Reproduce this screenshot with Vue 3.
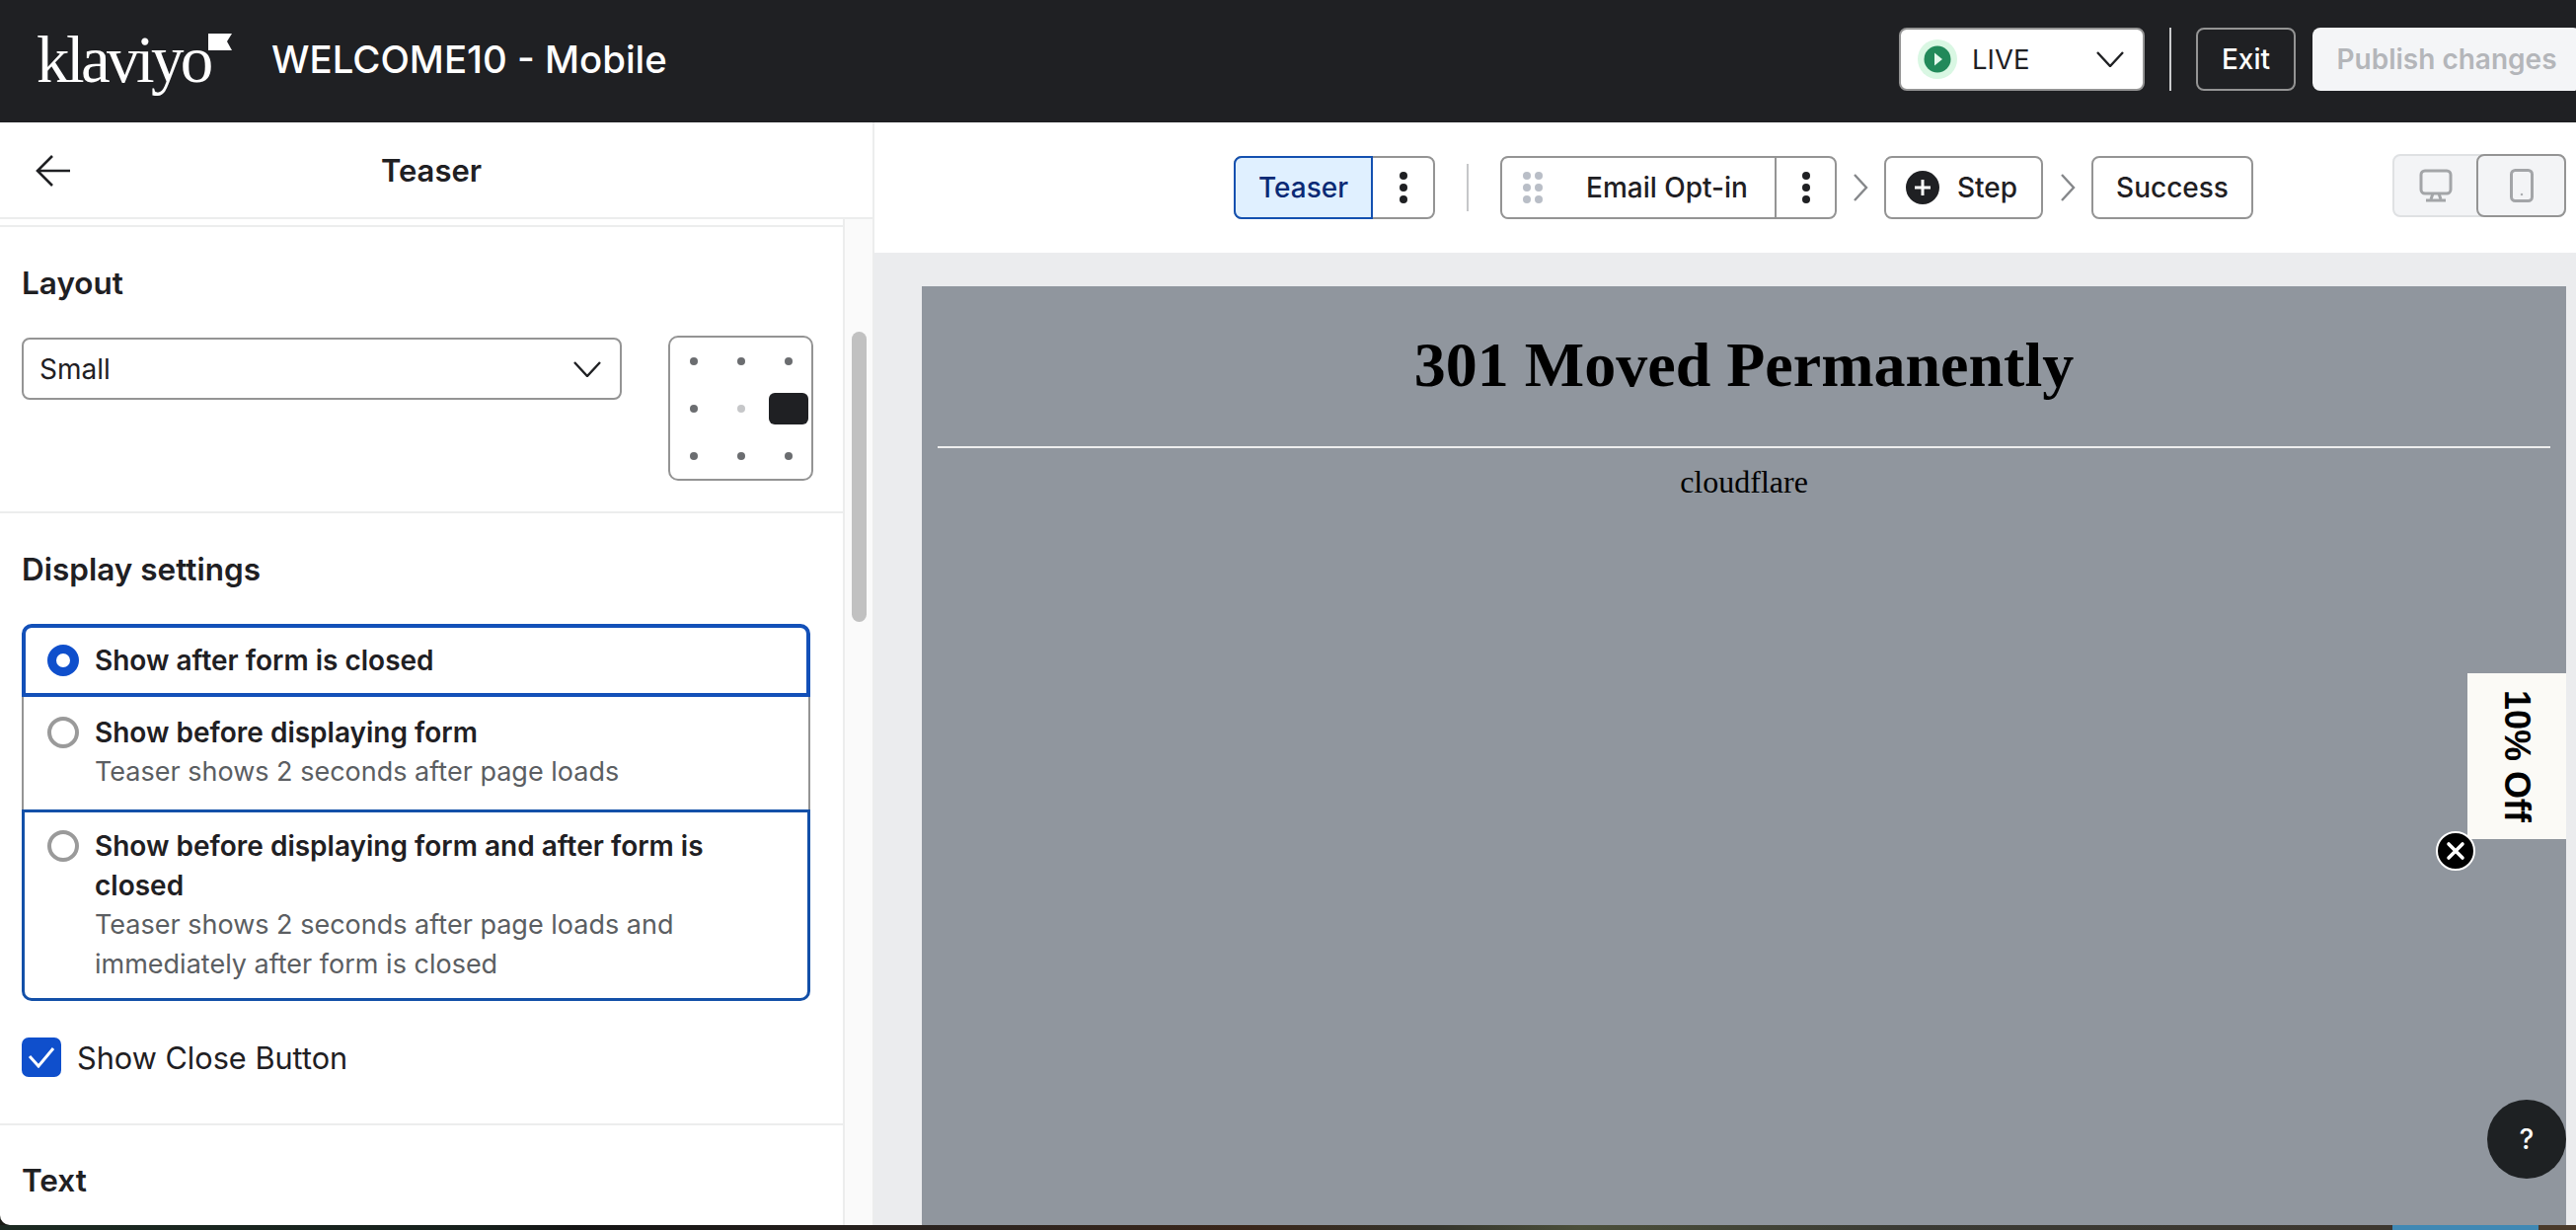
<script setup>
const gridDots = [
  "dot", "dot", "dot",
  "dot", "dot faint", "block",
  "dot", "dot", "dot",
];

const displayOptions = [
  { title: "Show after form is closed", cls: "opt-active", checked: true },
  {
    title: "Show before displaying form",
    desc: "Teaser shows 2 seconds after page loads",
    cls: "opt-middle",
  },
  {
    title: "Show before displaying form and after form is closed",
    desc: "Teaser shows 2 seconds after page loads and immediately after form is closed",
    cls: "opt-last",
  },
];
</script>

<template>
  <div class="app">
    <header class="topbar">
      <div class="logo">
        <span class="logo-word">klaviyo</span>
        <svg class="logo-flag" width="24" height="17" viewBox="0 0 24 17">
          <polygon points="0,0 24,0 19,8 24,17 0,17" fill="#fff" />
        </svg>
      </div>
      <div class="form-name">WELCOME10 - Mobile</div>
      <div class="top-actions">
        <div class="live-select">
          <span class="live-dot">
            <svg width="40" height="40" viewBox="0 0 40 40">
              <circle cx="20" cy="20" r="20" fill="#d9f7e3" />
              <circle cx="20" cy="20" r="13.5" fill="#22895a" />
              <polygon points="17,13.5 25,20 17,26.5" fill="#e4f8ec" />
            </svg>
          </span>
          <span class="live-label">LIVE</span>
          <svg class="live-caret" width="28" height="16" viewBox="0 0 28 16">
            <polyline points="1,1 14,15 27,1" fill="none" stroke="#1f2023" stroke-width="2.4" />
          </svg>
        </div>
        <span class="top-sep"></span>
        <button class="btn-exit">Exit</button>
        <button class="btn-publish">Publish changes</button>
      </div>
    </header>

    <div class="work">
      <aside class="panel">
        <div class="panel-head">
          <svg class="back" width="36" height="32" viewBox="0 0 36 32">
            <path d="M17 1 2 16l15 15M2 16h33" fill="none" stroke="#1f2023" stroke-width="2.6" />
          </svg>
          <span class="panel-title">Teaser</span>
        </div>
        <div class="panel-body">
          <div class="panel-scroll">
            <section class="sec sec-layout">
              <h3>Layout</h3>
              <div class="layout-row">
                <div class="select">
                  <span>Small</span>
                  <svg width="28" height="16" viewBox="0 0 28 16">
                    <polyline points="1,1 14,15 27,1" fill="none" stroke="#1f2023" stroke-width="2.4" />
                  </svg>
                </div>
                <div class="pos-grid">
                  <div v-for="(d, i) in gridDots" :key="i" class="cell"><span :class="d"></span></div>
                </div>
              </div>
            </section>

            <section class="sec sec-display">
              <h3>Display settings</h3>
              <div class="options">
                <div v-for="o in displayOptions" :key="o.title" class="opt" :class="o.cls">
                  <span class="radio" :class="{ on: o.checked }"></span>
                  <div class="opt-text">
                    <div class="opt-title">{{ o.title }}</div>
                    <div v-if="o.desc" class="opt-desc">{{ o.desc }}</div>
                  </div>
                </div>
              </div>
              <div class="check-row">
                <span class="check">
                  <svg width="28" height="22" viewBox="0 0 28 22">
                    <polyline points="2,10 11,20 26,2" fill="none" stroke="#fff" stroke-width="3" />
                  </svg>
                </span>
                <span>Show Close Button</span>
              </div>
            </section>

            <section class="sec sec-text">
              <h3>Text</h3>
            </section>
          </div>
          <div class="track"><div class="thumb"></div></div>
        </div>
      </aside>

      <main class="main">
        <div class="toolbar">
          <div class="step-group">
            <span class="step-name active">Teaser</span>
            <span class="kebab"><i></i><i></i><i></i></span>
          </div>
          <span class="tool-sep"></span>
          <div class="step-group email-group">
            <span class="step-name email">
              <svg class="drag" width="20" height="32" viewBox="0 0 20 32">
                <g fill="#b9bec7">
                  <circle cx="4" cy="4" r="4" /><circle cx="16" cy="4" r="4" />
                  <circle cx="4" cy="16" r="4" /><circle cx="16" cy="16" r="4" />
                  <circle cx="4" cy="28" r="4" /><circle cx="16" cy="28" r="4" />
                </g>
              </svg>
              Email Opt-in
            </span>
            <span class="kebab"><i></i><i></i><i></i></span>
          </div>
          <svg class="chev" width="16" height="28" viewBox="0 0 16 28">
            <polyline points="2,1 14,14 2,27" fill="none" stroke="#85878a" stroke-width="2.4" />
          </svg>
          <button class="step-btn add">
            <svg width="34" height="34" viewBox="0 0 34 34">
              <circle cx="17" cy="17" r="17" fill="#1f2023" />
              <path d="M17 9v16M9 17h16" stroke="#fff" stroke-width="3" />
            </svg>
            Step
          </button>
          <svg class="chev" width="16" height="28" viewBox="0 0 16 28">
            <polyline points="2,1 14,14 2,27" fill="none" stroke="#85878a" stroke-width="2.4" />
          </svg>
          <button class="step-btn success">Success</button>

          <div class="devices">
            <span class="device">
              <svg width="34" height="34" viewBox="0 0 34 34" fill="none" stroke="#a3a5a8" stroke-width="3">
                <rect x="2" y="2" width="30" height="23" rx="4" />
                <path d="M14 25l-2 6M20 25l2 6" />
                <path d="M7 32h20" />
              </svg>
            </span>
            <span class="device current">
              <svg width="24" height="34" viewBox="0 0 24 34" fill="none" stroke="#a3a5a8" stroke-width="3">
                <rect x="1.5" y="1.5" width="21" height="31" rx="4" />
                <circle cx="12" cy="26" r="0.8" fill="#a3a5a8" stroke-width="1" />
              </svg>
            </span>
          </div>
        </div>

        <div class="stage">
          <div class="preview">
            <h1>301 Moved Permanently</h1>
            <hr />
            <div class="cf">cloudflare</div>
            <div class="teaser">10% Off</div>
            <span class="teaser-close">
              <svg width="24" height="24" viewBox="0 0 24 24">
                <path d="M5 5l14 14M19 5 5 19" stroke="#fff" stroke-width="3.6" stroke-linecap="round" />
              </svg>
            </span>
            <span class="help">?</span>
          </div>
        </div>
      </main>
    </div>

    <div class="strip">
      <i class="s1"></i><i class="s2"></i><i class="s3"></i>
    </div>
  </div>
</template>

<style>
body {
  margin: 0;
  background: #1a1c16;
}
</style>

<style scoped>
.app {
  width: 2610px;
  height: 1246px;
  display: flex;
  flex-direction: column;
  overflow: hidden;
  font-family: Inter, "Liberation Sans", sans-serif;
  color: #1f2023;
  background: #1a1c16;
}

/* top bar */
.topbar {
  height: 124px;
  flex: none;
  box-sizing: border-box;
  display: flex;
  align-items: center;
  background: #1f2023;
  color: #fff;
  padding: 0 0 4px 37px;
}
.logo {
  width: 238px;
  height: 120px;
  display: flex;
  align-items: flex-start;
}
.logo-word {
  font-family: "Liberation Serif", serif;
  font-size: 67px;
  line-height: 76px;
  margin-top: 22px;
  letter-spacing: -3.6px;
  color: #fff;
}
.logo-flag {
  margin-top: 34px;
  margin-left: -2px;
}
.form-name {
  font-size: 38.4px;
  font-weight: 500;
}
.top-actions {
  margin-left: auto;
  margin-right: -5px;
  display: flex;
  align-items: center;
  height: 64px;
}
.live-select {
  width: 249px;
  height: 64px;
  box-sizing: border-box;
  display: flex;
  align-items: center;
  background: #fff;
  border: 2px solid #949494;
  border-radius: 8px;
  color: #1f2023;
  padding-left: 17px;
  font-size: 27.5px;
}
.live-dot {
  display: flex;
  margin-right: 15px;
}
.live-caret {
  margin-left: auto;
  margin-right: 19px;
}
.top-sep {
  width: 2px;
  height: 64px;
  background: #c9cacc;
  margin: 0 25px;
}
.btn-exit {
  width: 101px;
  height: 64px;
  box-sizing: border-box;
  background: transparent;
  border: 2px solid #949494;
  border-radius: 8px;
  color: #fff;
  font: 500 28px Inter, sans-serif;
  padding: 0;
}
.btn-publish {
  width: 272px;
  height: 64px;
  margin-left: 17px;
  background: #f4f5f7;
  border: none;
  border-radius: 8px;
  color: #b4b6ba;
  font: 600 28px Inter, sans-serif;
  padding: 0;
}

/* left panel */
.work {
  flex: 1;
  min-height: 0;
  display: flex;
  background: #fff;
  border-bottom-left-radius: 10px;
  overflow: hidden;
}
.panel {
  width: 886px;
  flex: none;
  box-sizing: border-box;
  display: flex;
  flex-direction: column;
  border-right: 2px solid #eceded;
}
.panel-head {
  height: 98px;
  flex: none;
  box-sizing: border-box;
  border-bottom: 2px solid #eceded;
  display: flex;
  align-items: center;
  justify-content: center;
  position: relative;
}
.back {
  position: absolute;
  left: 36px;
  top: 33px;
}
.panel-title {
  font-size: 31px;
  font-weight: 600;
  margin-right: 10px;
}
.panel-body {
  flex: 1;
  min-height: 0;
  display: flex;
  padding-top: 6px;
}
.panel-scroll {
  width: 854px;
  flex: none;
  border-top: 2px solid #eceded;
  overflow: hidden;
}
.track {
  flex: 1;
  margin-top: -6px;
  background: #fafafa;
  border-left: 2px solid #eceded;
  box-sizing: border-box;
}
.thumb {
  width: 15px;
  height: 294px;
  margin: 114px 0 0 7px;
  background: #c1c1c1;
  border-radius: 8px;
}
.sec {
  padding: 37px 0 0 22px;
  box-sizing: border-box;
}
.sec h3 {
  margin: 0;
  font-size: 31.5px;
  line-height: 40px;
  font-weight: 600;
}
.sec-layout {
  height: 290px;
  border-bottom: 2px solid #eceded;
}
.layout-row {
  display: flex;
  align-items: flex-start;
  margin-top: 33px;
}
.select {
  width: 608px;
  height: 63px;
  margin-top: 2px;
  box-sizing: border-box;
  border: 2px solid #949494;
  border-radius: 8px;
  display: flex;
  align-items: center;
  justify-content: space-between;
  padding: 0 19px 0 16px;
  font-size: 28px;
}
.pos-grid {
  width: 147px;
  height: 147px;
  margin-left: 47px;
  box-sizing: border-box;
  border: 2px solid #949494;
  border-radius: 10px;
  display: grid;
  grid-template-columns: repeat(3, 48px);
  grid-template-rows: repeat(3, 48px);
  justify-content: center;
  align-content: center;
}
.cell {
  display: flex;
  align-items: center;
  justify-content: center;
}
.dot {
  width: 8px;
  height: 8px;
  border-radius: 50%;
  background: #6b6d70;
}
.dot.faint {
  background: #c6c7c9;
}
.block {
  width: 40px;
  height: 32px;
  flex: none;
  border-radius: 6px;
  background: #1f2023;
}
.sec-display {
  height: 620px;
  border-bottom: 2px solid #eceded;
}
.options {
  width: 799px;
  margin-top: 35px;
}
.opt {
  box-sizing: border-box;
  display: flex;
  align-items: flex-start;
  font-size: 28px;
  line-height: 40px;
}
.opt-active {
  height: 74px;
  border: 4px solid #1350b8;
  border-radius: 10px 10px 0 0;
  padding: 13px 0 0 22px;
}
.opt-middle {
  height: 114px;
  border-left: 2px solid #949494;
  border-right: 2px solid #949494;
  padding: 16px 0 0 24px;
}
.opt-last {
  height: 194px;
  border: 3px solid #1350a8;
  border-radius: 0 0 10px 10px;
  padding: 14px 22px 0 23px;
}
.radio {
  width: 32px;
  height: 32px;
  flex: none;
  box-sizing: border-box;
  border: 4px solid #9a9a9a;
  border-radius: 50%;
  margin: 4px 16px 0 0;
}
.radio.on {
  border: 9px solid #0f4fcc;
}
.opt-title {
  font-weight: 600;
}
.opt-desc {
  color: #5b5e62;
  font-size: 27px;
}
.check-row {
  display: flex;
  align-items: center;
  gap: 16px;
  margin-top: 37px;
  font-size: 30.7px;
  height: 40px;
}
.check {
  width: 40px;
  height: 40px;
  border-radius: 7px;
  background: #0f4fcc;
  display: flex;
  align-items: center;
  justify-content: center;
}
.sec-text {
  padding-top: 36px;
}

/* toolbar */
.main {
  flex: 1;
  min-width: 0;
  display: flex;
  flex-direction: column;
}
.toolbar {
  height: 132px;
  flex: none;
  box-sizing: border-box;
  display: flex;
  align-items: center;
  padding: 0 10px 0 364px;
}
.step-group {
  height: 64px;
  box-sizing: border-box;
  display: flex;
  border: 2px solid #949494;
  border-radius: 8px;
  font-size: 28px;
  font-weight: 500;
}
.email-group {
  margin-right: -1px;
}
.email-group .kebab {
  width: 59px;
}
.step-name {
  display: flex;
  align-items: center;
  justify-content: center;
}
.step-name.active {
  width: 141px;
  margin: -2px 0 -2px -2px;
  box-sizing: border-box;
  background: #e0f0ff;
  color: #0a2a75;
  border: 2px solid #1350b0;
  border-radius: 8px 0 0 8px;
}
.step-name.email {
  width: 278px;
  position: relative;
  box-sizing: border-box;
  border-right: 2px solid #949494;
  justify-content: flex-start;
  padding-left: 85px;
}
.drag {
  position: absolute;
  left: 21px;
  top: 14px;
}
.kebab {
  width: 61px;
  display: flex;
  flex-direction: column;
  align-items: center;
  justify-content: center;
  gap: 4px;
}
.kebab i {
  width: 8px;
  height: 8px;
  border-radius: 50%;
  background: #1f2023;
}
.tool-sep {
  width: 2px;
  height: 48px;
  background: #c6c7c9;
  margin: 0 32px;
}
.chev {
  margin: 0 16px 0 17px;
  flex: none;
}
.step-btn {
  height: 64px;
  box-sizing: border-box;
  border: 2px solid #949494;
  border-radius: 8px;
  background: #fff;
  color: #1f2023;
  font: 500 28px Inter, sans-serif;
  display: flex;
  align-items: center;
  padding: 0;
}
.step-btn.add {
  width: 161px;
  padding-left: 20px;
  gap: 18px;
}
.step-btn.success {
  width: 164px;
  justify-content: center;
}
.devices {
  width: 176px;
  height: 64px;
  margin: -4px 0 0 auto;
  box-sizing: border-box;
  background: #f3f4f6;
  border: 2px solid #dfe1e3;
  border-radius: 8px;
  display: flex;
}
.device {
  flex: 1;
  display: flex;
  align-items: center;
  justify-content: center;
}
.device.current {
  flex: none;
  width: 87px;
  margin: -2px -2px -2px 0;
  border: 2px solid #949494;
  border-radius: 8px;
}

/* preview */
.stage {
  flex: 1;
  min-height: 0;
  background: #ebecee;
  padding: 34px 10px 0 48px;
}
.preview {
  height: 100%;
  position: relative;
  background: #90969e;
  color: #000;
  font-family: "Liberation Serif", serif;
  padding: 0 16px;
  text-align: center;
}
.preview h1 {
  margin: 0;
  padding-top: 43px;
  font-size: 64px;
  line-height: 74px;
  font-weight: 700;
}
.preview hr {
  margin: 45px 0 0;
  height: 2px;
  border: none;
  background: #eeeeee;
}
.cf {
  margin-top: 16px;
  font-size: 32px;
  line-height: 37px;
}
.teaser {
  position: absolute;
  right: 0;
  top: 392px;
  width: 100px;
  height: 168px;
  box-sizing: border-box;
  background: #fbfaf6;
  font: 700 36px "Liberation Sans", sans-serif;
  writing-mode: vertical-rl;
  display: flex;
  align-items: center;
  justify-content: center;
}
.teaser-close {
  position: absolute;
  right: 92px;
  top: 552px;
  width: 40px;
  height: 40px;
  box-sizing: border-box;
  border-radius: 50%;
  background: #000;
  border: 2px solid #fff;
  display: flex;
  align-items: center;
  justify-content: center;
}
.help {
  position: absolute;
  right: 0;
  top: 824px;
  width: 80px;
  height: 80px;
  border-radius: 50%;
  background: #1e2123;
  color: #fff;
  font: 500 28px Inter, sans-serif;
  display: flex;
  align-items: center;
  justify-content: center;
}

.strip {
  height: 5px;
  flex: none;
  display: flex;
}
.strip i {
  display: block;
  height: 100%;
}
.s1 {
  flex: 1;
  background: linear-gradient(90deg, #1c2a22 0, #16201c 20%, #141414 24%, #2c2420 40%, #3a261a 52%, #35352c 60%, #4b4f3a 66%, #3a3a34 80%, #3d372f 100%);
}
.s2 {
  width: 148px;
  background: #3f88b4;
}
.s3 {
  width: 38px;
  background: #4a3a2a;
}
</style>
